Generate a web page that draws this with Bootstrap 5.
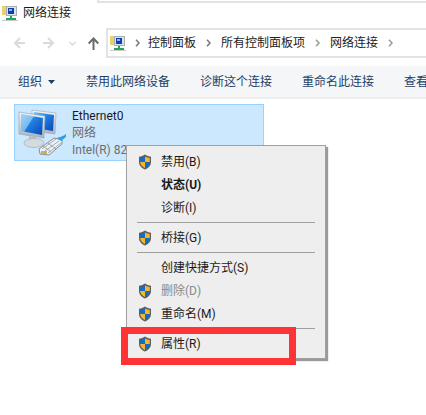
<!DOCTYPE html>
<html lang="zh-CN">
<head>
<meta charset="utf-8">
<title>网络连接</title>
<link href="https://cdn.jsdelivr.net/npm/bootstrap@5.3.0/dist/css/bootstrap.min.css" rel="stylesheet">
<style>
html,body{height:415px;overflow:hidden;background:#fff}
body{font-family:Roboto,"Noto Sans CJK SC",sans-serif;font-size:12px;line-height:16px;color:#1a1a1a;position:relative}
.win-title{height:28px;padding:0 0 3px 2px;gap:5px}
.tab-strip{height:3px;margin-left:97px;margin-top:-28px;margin-bottom:25px;border-left:2px solid #e3e3e3;border-bottom:2px solid #e3e3e3}
.nav-row{height:38px;padding-bottom:8px}
.nav-btns{width:106px;flex:none}
.nav-slot{flex:none;display:flex}
.slot-back{width:43px;padding-left:13px}
.slot-fwd{width:26px}
.slot-down{width:19px}
.slot-up{width:18px}
.addr-box{flex:1;border:2px solid #e3e3e3;border-right:0;height:30px;padding-left:2px;color:#222}
.crumb-sep{width:25px;flex:none;display:flex;justify-content:center}
.crumb-first{width:22px}
.tool-row{height:31px;background:#f5f6f7;color:#1e3f66;padding-left:18px;white-space:nowrap;overflow:hidden}
.tool-gap{margin-left:30px}
.tool-caret{margin-left:6px;margin-right:1px}
.rule-line{height:2px;background:#eeeeee}
.net-item{width:250px;height:57px;margin:5px 0 0 14px;background:#cce8ff;border:1px solid #99d1ff;padding:2px 0 0 3px;gap:3px;overflow:hidden}
.net-text{line-height:17px;white-space:nowrap;width:54px;overflow:hidden;padding-top:1px}
.net-sub{color:#6d6d6d}
.ctx-menu.show{display:block;position:absolute;left:126px;top:145px;width:200px;height:213.5px;margin:0;padding:4px 0 0;background:#eeeeee;border:1px solid #a0a0a0;border-radius:0;box-shadow:2px 2px 1px #9a9a9a;font-size:12px;min-width:0;--bs-dropdown-min-width:0}
.ctx-menu .dropdown-item{height:23px;padding:0 0 0 11px;display:flex;align-items:center;gap:9px;color:#1a1a1a;font-size:12px;background:transparent}
.ctx-menu .dropdown-item.off{color:#8a8a8a}
.ctx-menu .plain{padding-left:34px}
.ctx-menu hr.dropdown-divider{margin:3px 10px 3px 10px;height:1px;border:0;background:#a0a0a0;opacity:1;overflow:visible}
.mark-box{position:absolute;z-index:1001;left:121px;top:327px;width:175px;height:38px;border:7px solid #ff3333;pointer-events:none}
.ico{flex:none;display:block}
</style>
</head>
<body>
<svg width="0" height="0" style="position:absolute">
  <defs>
    <linearGradient id="scr" x1="0" y1="0" x2="1" y2="1"><stop offset="0" stop-color="#7cc4f5"/><stop offset=".45" stop-color="#1f7fe0"/><stop offset="1" stop-color="#0a45b8"/></linearGradient>
    <linearGradient id="frm" x1="0" y1="0" x2="0" y2="1"><stop offset="0" stop-color="#f2f5f8"/><stop offset="1" stop-color="#a9b3bc"/></linearGradient>
    <symbol id="shield" viewBox="0 0 14 16">
      <path d="M7 .6C5.400 1.900 3.200 2.600 1 2.700v5.200c0 3.500 2.600 6.100 6 7.500 3.400-1.400 6-4 6-7.500V2.700C10.800 2.600 8.600 1.900 7 .6z" fill="#5d5d5d"/>
      <path d="M7 2.200C5.600 3.200 4 3.800 2.200 3.900V8h4.800z" fill="#0f6fc6"/>
      <path d="M7 2.200C8.400 3.200 10 3.800 11.800 3.900V8H7z" fill="#f7b52c"/>
      <path d="M2.200 8c.1 2.800 2.200 4.800 4.800 6V8z" fill="#f7b52c"/>
      <path d="M11.800 8c-.1 2.800-2.200 4.800-4.800 6V8z" fill="#0f6fc6"/>
    </symbol>
    <symbol id="netsmall" viewBox="0 0 16 16">
      <rect x="0" y="1" width="9" height="9" fill="#e9cf6e"/>
      <rect x="4" y="1" width="11" height="10" fill="#a7afb5"/>
      <rect x="5" y="2" width="9" height="8" fill="#d9e2ea"/>
      <rect x="6" y="3" width="6" height="6" fill="#1040b0"/>
      <rect x="7" y="4" width="3" height="2" fill="#7ab8ee"/>
      <rect x="8" y="11" width="2" height="2" fill="#29a35a"/>
      <rect x="4" y="13" width="10" height="2" fill="#29a35a"/>
      <rect x="0" y="15" width="16" height="1" fill="#c9c9c9"/>
    </symbol>
  </defs>
</svg>

<div class="win-title d-flex align-items-center">
  <svg class="ico" width="16" height="16"><use href="#netsmall"/></svg>
  <span>网络连接</span>
</div>
<div class="tab-strip"></div>

<div class="nav-row d-flex">
  <div class="nav-btns d-flex align-items-center">
    <span class="nav-slot slot-back"><svg class="ico" width="12" height="12" viewBox="0 0 12 12" fill="none" stroke="#dadada" stroke-width="2"><path d="M12 6H2M7 1 2 6l5 5"/></svg></span>
    <span class="nav-slot slot-fwd"><svg class="ico" width="12" height="12" viewBox="0 0 12 12" fill="none" stroke="#dadada" stroke-width="2"><path d="M0 6h10M5 1l5 5-5 5"/></svg></span>
    <span class="nav-slot slot-down"><svg class="ico" width="7" height="5" viewBox="0 0 7 5" fill="none" stroke="#dadada" stroke-width="1.500"><path d="M.5 1 3.500 4 6.500 1"/></svg></span>
    <span class="nav-slot slot-up"><svg class="ico" width="11" height="13" viewBox="0 0 11 13" fill="none" stroke="#6b6b6b" stroke-width="2"><path d="M5.500 13V2M.7 6.500l4.800-5 4.800 5"/></svg></span>
  </div>
  <div class="addr-box d-flex align-items-center">
    <svg class="ico" width="16" height="16"><use href="#netsmall"/></svg>
    <span class="crumb-sep crumb-first"><svg class="ico" width="5" height="8" viewBox="0 0 5 8" fill="none" stroke="#777" stroke-width="1.500"><path d="M1 .8 4 4 1 7.200"/></svg></span>
    <span>控制面板</span>
    <span class="crumb-sep"><svg class="ico" width="5" height="8" viewBox="0 0 5 8" fill="none" stroke="#777" stroke-width="1.500"><path d="M1 .8 4 4 1 7.200"/></svg></span>
    <span>所有控制面板项</span>
    <span class="crumb-sep"><svg class="ico" width="5" height="8" viewBox="0 0 5 8" fill="none" stroke="#999" stroke-width="1.500"><path d="M1 .8 4 4 1 7.200"/></svg></span>
    <span>网络连接</span>
    <span class="crumb-sep"><svg class="ico" width="5" height="8" viewBox="0 0 5 8" fill="none" stroke="#999" stroke-width="1.500"><path d="M1 .8 4 4 1 7.200"/></svg></span>
  </div>
</div>

<div class="tool-row d-flex align-items-center">
  <span>组织</span>
  <svg class="ico tool-caret" width="7" height="4" viewBox="0 0 7 4"><path d="M0 0h7L3.500 4z" fill="#1e3f66"/></svg>
  <span class="tool-gap">禁用此网络设备</span>
  <span class="tool-gap">诊断这个连接</span>
  <span class="tool-gap">重命名此连接</span>
  <span class="tool-gap">查看</span>
</div>
<div class="rule-line"></div>

<div class="net-item d-flex">
  <svg class="ico" width="51" height="52" viewBox="0 0 51 52">
    <path d="M14 3 38 6 37 27 14 24z" fill="url(#frm)" stroke="#9fb0bd" stroke-width=".7"/>
    <path d="M16 5 36 8 35 24 16 21z" fill="url(#scr)"/>
    <path d="M1 5 27 9 26 31 1 27z" fill="url(#frm)" stroke="#98a8b5" stroke-width=".7"/>
    <path d="M3 7 25 11 24 28 3 24z" fill="url(#scr)"/>
    <path d="M3 7 16 9 6 25 3 24z" fill="#bfe3fb" opacity=".55"/>
    <path d="M11 29 18 30 18 34 11 33z" fill="#b7bfc6"/>
    <ellipse cx="16" cy="36" rx="10" ry="4.500" fill="#d5dade" stroke="#a6aeb5" stroke-width=".7"/>
    <path d="M21 42 36 31 44 33 44 37 31 48 22 47z" fill="#eef1f3" stroke="#77858f" stroke-width=".9"/>
    <path d="M24 42 38 32M27 44 41 34M30 46 43 36M25 39l8 6M30 36l8 6" stroke="#8f9aa3" stroke-width=".8" fill="none"/>
    <path d="M23 44h6v3h-6z" fill="#c9a53a" opacity=".85"/>
    <path d="M39 31 48 27 48 30 43 34z" fill="#2f9fe8"/>
    <path d="M41 30 47 27.500" stroke="#c4e8fb" stroke-width="1"/>
  </svg>
  <div class="net-text">
    <div>Ethernet0</div>
    <div class="net-sub">网络</div>
    <div class="net-sub">Intel(R) 82574L</div>
  </div>
</div>

<ul class="dropdown-menu show ctx-menu list-unstyled">
  <li><span class="dropdown-item"><svg class="ico" width="14" height="16"><use href="#shield"/></svg>禁用(B)</span></li>
  <li><span class="dropdown-item plain fw-bold">状态(U)</span></li>
  <li><span class="dropdown-item plain">诊断(I)</span></li>
  <li><hr class="dropdown-divider"></li>
  <li><span class="dropdown-item"><svg class="ico" width="14" height="16"><use href="#shield"/></svg>桥接(G)</span></li>
  <li><hr class="dropdown-divider"></li>
  <li><span class="dropdown-item plain">创建快捷方式(S)</span></li>
  <li><span class="dropdown-item off"><svg class="ico" width="14" height="16"><use href="#shield"/></svg>删除(D)</span></li>
  <li><span class="dropdown-item"><svg class="ico" width="14" height="16"><use href="#shield"/></svg>重命名(M)</span></li>
  <li><hr class="dropdown-divider"></li>
  <li><span class="dropdown-item"><svg class="ico" width="14" height="16"><use href="#shield"/></svg>属性(R)</span></li>
</ul>
<div class="mark-box"></div>
<script src="https://cdn.jsdelivr.net/npm/bootstrap@5.3.0/dist/js/bootstrap.bundle.min.js"></script>
</body>
</html>
